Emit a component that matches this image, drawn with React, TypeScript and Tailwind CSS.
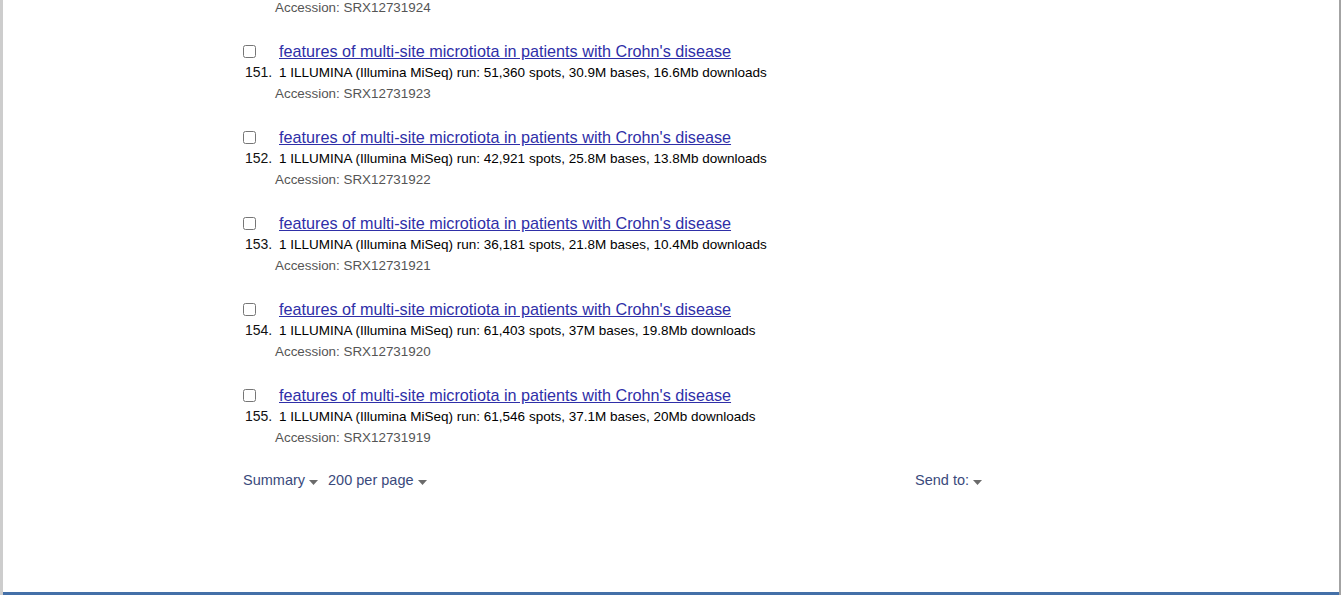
import React from 'react';

type Item = {
  num: number;
  spots: string;
  bases: string;
  size: string;
  accession: string;
};

const items: Item[] = [
  { num: 151, spots: '51,360', bases: '30.9M', size: '16.6Mb', accession: 'SRX12731923' },
  { num: 152, spots: '42,921', bases: '25.8M', size: '13.8Mb', accession: 'SRX12731922' },
  { num: 153, spots: '36,181', bases: '21.8M', size: '10.4Mb', accession: 'SRX12731921' },
  { num: 154, spots: '61,403', bases: '37M', size: '19.8Mb', accession: 'SRX12731920' },
  { num: 155, spots: '61,546', bases: '37.1M', size: '20Mb', accession: 'SRX12731919' },
];

const TITLE = "features of multi-site microtiota in patients with Crohn's disease";

const Caret = () => (
  <svg width="9" height="5" viewBox="0 0 9 5" className="ml-[4px] mt-[3px] inline-block">
    <path d="M0 0 L9 0 L4.5 5 Z" fill="#6b6b6b" />
  </svg>
);

const Result = ({ item }: { item: Item }) => (
  <div className="grid grid-cols-[36px_1fr] mt-[23px]">
    <div className="h-[21px] flex items-center">
      <input type="checkbox" className="m-0 w-[13px] h-[13px] ml-0 mt-[-1px]" />
    </div>
    <div className="h-[21px] leading-[21px] text-[16.2px]">
      <a href="#" className="text-[#2f2fa8] underline">
        {TITLE}
      </a>
    </div>
    <div className="h-[21px] leading-[21px] text-[14px] text-[#111] pl-[2px]">
      {item.num}.
    </div>
    <div className="h-[21px] leading-[21px] text-[13.5px] text-black">
      1 ILLUMINA (Illumina MiSeq) run: {item.spots} spots, {item.bases} bases, {item.size} downloads
    </div>
    <div />
    <div className="h-[21px] leading-[21px] text-[13.4px] text-[#555] -ml-[4px]">
      Accession: {item.accession}
    </div>
  </div>
);

export default function App() {
  return (
    <div
      className="h-[595px] w-full bg-white border-l-[3px] border-l-[#cdcdcd] border-r-[2px] border-r-[#a3a3a3] flex flex-col overflow-hidden"
      style={{ fontFamily: '"Liberation Sans", Arial, sans-serif' }}
    >
      <div className="flex-1 pl-[240px]">
        <div className="w-[745px]">
          <div className="h-[21px] leading-[21px] text-[13.4px] text-[#555] pl-[32px] -mt-[3px]">
            Accession: SRX12731924
          </div>
          {items.map((item) => (
            <Result key={item.num} item={item} />
          ))}
          <div className="flex items-center justify-between mt-[23px] h-[20px] text-[14.5px] text-[#3a4a7c]">
            <div className="flex items-center">
              <span>Summary</span>
              <Caret />
              <span className="ml-[10px]">200 per page</span>
              <Caret />
            </div>
            <div className="flex items-center mr-[6px]">
              <span>Send to:</span>
              <Caret />
            </div>
          </div>
        </div>
      </div>
      <div className="h-[3px] bg-[#4470a8]" />
    </div>
  );
}
